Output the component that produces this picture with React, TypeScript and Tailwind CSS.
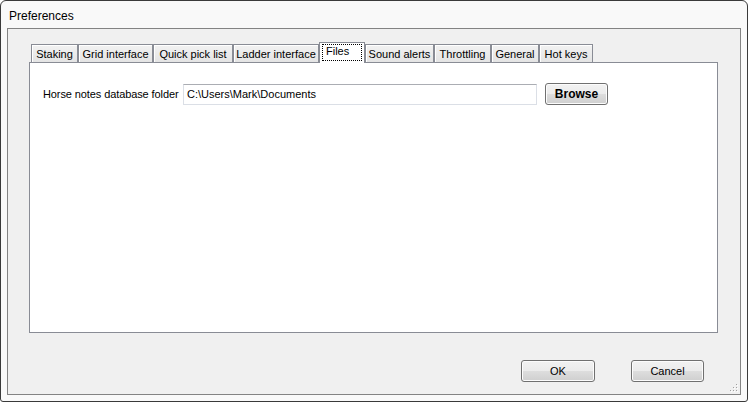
const tabs = [
  { label: "Staking", w: "w-[47px]" },
  { label: "Grid interface", w: "w-[75px]" },
  { label: "Quick pick list", w: "w-[80px]" },
  { label: "Ladder interface", w: "w-[86px]" },
  { label: "Files", w: "w-[46px]", active: true },
  { label: "Sound alerts", w: "w-[69px]" },
  { label: "Throttling", w: "w-[57px]" },
  { label: "General", w: "w-[48px]" },
  { label: "Hot keys", w: "w-[54px]" },
];

const Grip = () => (
  <svg width="8" height="8" viewBox="0 0 8 8" className="absolute right-[2px] bottom-[2px]">
    {[
      [6, 0],
      [6, 3],
      [3, 3],
      [6, 6],
      [3, 6],
      [0, 6],
    ].map(([x, y]) => (
      <g key={`${x}-${y}`}>
        <rect x={x + 1} y={y + 1} width="1" height="1" fill="#ffffff" />
        <rect x={x} y={y} width="1" height="1" fill="#a0a0a0" />
      </g>
    ))}
  </svg>
);

const DialogButton = ({ label, w, bold }: { label: string; w: string; bold?: boolean }) => (
  <button
    className={`${w} h-[22px] rounded-[3px] border border-[#707070] bg-[linear-gradient(#f2f2f2_0%,#ebebeb_50%,#dddddd_51%,#cfcfcf_100%)] shadow-[inset_0_0_0_1px_#fcfcfc] text-black flex items-center justify-center ${bold ? "font-bold text-[12px]" : "text-[11px]"}`}
  >
    {label}
  </button>
);

export default function App() {
  return (
    <div className="w-[748px] h-[402px] bg-white font-['Liberation_Sans',Arial,sans-serif]">
      <div className="w-[748px] h-[402px] flex flex-col border border-[#3a3a3a] rounded-t-[6px] rounded-b-[3px] bg-[#f9f9f9]">
        <div className="h-[27px] pl-[8px] pt-[2px] flex items-center text-[12px] text-black">Preferences</div>
        <div className="relative flex-1 mx-[6px] mb-[6px] border border-[#838383] bg-[#f0f0f0] flex flex-col">
          <div className="pt-[13px] pl-[21px] pr-[22px]">
            <div className="flex items-end h-[20px] pl-[2px]">
              {tabs.map((t) =>
                t.active ? (
                  <div
                    key={t.label}
                    className={`${t.w} h-[21px] -mb-[1px] relative z-10 bg-white border border-b-0 border-[#898c95] pl-[2px] pt-[1px]`}
                  >
                    <div className="w-[40px] h-[17px] pl-[3px] border border-dotted border-black text-[11px] leading-[13px] text-black">
                      {t.label}
                    </div>
                  </div>
                ) : (
                  <div
                    key={t.label}
                    className={`${t.w} h-[18px] pt-[1px] border border-b-0 border-[#898c95] bg-[linear-gradient(#f2f2f2,#e4e4e4)] shadow-[inset_1px_1px_0_#ffffff] flex items-center justify-center text-[11px] text-black`}
                  >
                    {t.label}
                  </div>
                ),
              )}
            </div>
            <div className="h-[271px] border border-[#898c95] bg-white pl-[13px] pt-[20px]">
              <div className="flex items-center h-[22px]">
                <span className="text-[11px] text-black w-[140px] tracking-[-0.1px]">Horse notes database folder</span>
                <div className="w-[354px] h-[21px] border border-[#dbdfe6] border-t-[#abadb3] pl-[3px] flex items-center text-[11px] text-black">
                  C:\Users\Mark\Documents
                </div>
                <div className="ml-[8px]">
                  <DialogButton label="Browse" w="w-[63px]" bold />
                </div>
              </div>
            </div>
          </div>
          <div className="flex justify-end gap-[36px] pr-[36px] mt-[27px]">
            <DialogButton label="OK" w="w-[74px]" />
            <DialogButton label="Cancel" w="w-[73px]" />
          </div>
          <Grip />
        </div>
      </div>
    </div>
  );
}
